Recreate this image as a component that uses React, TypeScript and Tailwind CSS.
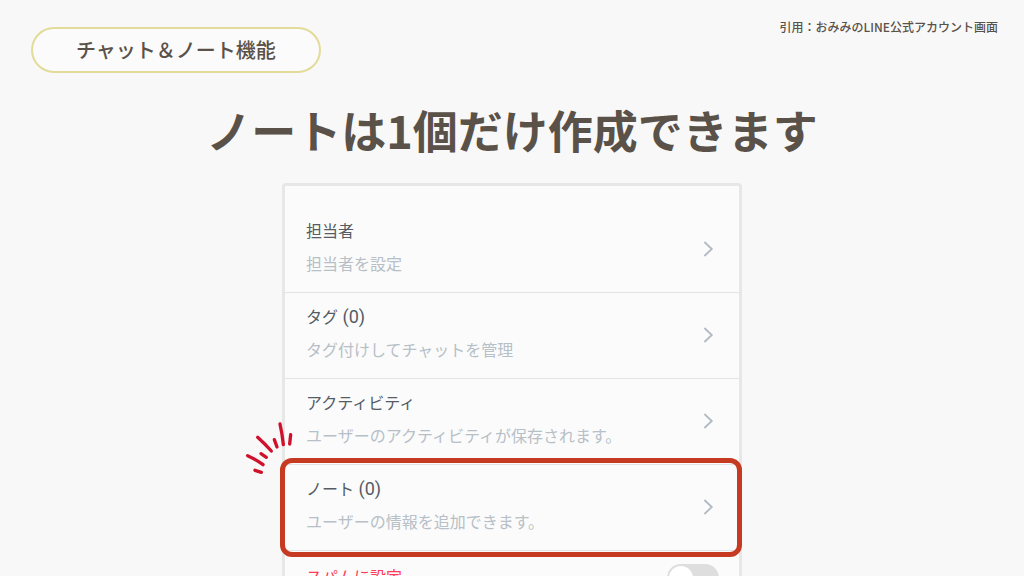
import React, { useState } from 'react';
import { clsx } from 'clsx';

const rows = [
  { title: '担当者', text: '担当者を設定' },
  { title: 'タグ', count: 0, text: 'タグ付けしてチャットを管理' },
  { title: 'アクティビティ', text: 'ユーザーのアクティビティが保存されます。' },
  { title: 'ノート', count: 0, text: 'ユーザーの情報を追加できます。', highlight: true },
];

const Chevron = () => (
  <svg width="12" height="18" viewBox="0 0 12 18" fill="none" stroke="#b1bac3" strokeWidth="1.8" aria-hidden="true">
    <path d="M2.4 2 L9.8 9 L2.4 16" />
  </svg>
);

// hand drawn strokes at the corner of the highlighted row
const Sparks = () => (
  <svg
    className="absolute -top-[54px] -left-[50px] pointer-events-none"
    width="60"
    height="70"
    viewBox="0 0 180 210"
    fill="none"
    stroke="#d0112b"
    strokeWidth="10"
    strokeLinecap="round"
    aria-hidden="true"
  >
    <path d="M38 134 Q64 146 84 161" />
    <path d="M68 79 Q90 99 109 120" />
    <path d="M135 39 Q142 70 145 101" />
    <path d="M167 71 L164 99" />
    <path d="M118 86 L126 108" />
    <path d="M78 128 L94 139" />
    <path d="M60 178 L79 184" />
  </svg>
);

const SettingRow = ({ title, count, text, highlight }: { title: string; count?: number; text: string; highlight?: boolean }) => (
  <li className="relative border-b border-[#e3e4e5]">
    <button type="button" className="flex w-full items-center justify-between pt-[13px] pb-[15px] pl-[21px] pr-[25px] text-left">
      <span className="block">
        <span className="block text-base leading-6 text-[#555c65]">
          {title}
          {count !== undefined && <span className="text-lg leading-none"> ({count})</span>}
        </span>
        <span className="mt-[9px] block text-base leading-6 text-[#b7bfc7]">{text}</span>
      </span>
      <Chevron />
    </button>
    {highlight && (
      <>
        <span className="absolute -inset-y-[7px] -left-[5px] -right-[3px] rounded-xl border-[5px] border-[#c63a21] pointer-events-none" />
        <Sparks />
      </>
    )}
  </li>
);

const App = () => {
  const [spam, setSpam] = useState(false);

  return (
    <main className="h-screen overflow-hidden bg-[#f8f8f8] font-['Noto_Sans_CJK_JP',sans-serif] text-[#5a5149]">
      <header className="flex items-start justify-between pt-[18px] pr-[26px] pl-[31px]">
        <p className="mt-[9px] rounded-full border-2 border-[#e3db98] bg-[#fbfbfb] px-[43px] py-[7px] text-xl leading-7 font-medium">
          チャット＆ノート機能
        </p>
        <p className="text-xs leading-[18px] font-medium">引用：おみみのLINE公式アカウント画面</p>
      </header>

      <h1 className="mt-[25px] text-center text-[45px] leading-[64px] font-bold">ノートは1個だけ作成できます</h1>

      <section className="mx-auto mt-[21px] w-full max-w-[460px] rounded-sm border-[3px] border-[#e7e7e6] bg-[#fbfbfb] pt-[21px] font-[Roboto,'Noto_Sans_CJK_JP',sans-serif]">
        <ul>
          {rows.map(row => (
            <SettingRow key={row.title} {...row} />
          ))}
        </ul>
        <label className="flex items-center justify-between pt-[13px] pb-4 pl-[21px] pr-5 text-base leading-6 text-[#ff3b57]">
          スパムに設定
          <input
            type="checkbox"
            checked={spam}
            onChange={e => setSpam(e.target.checked)}
            className={clsx(
              'h-7 w-[52px] appearance-none rounded-full p-[2px] before:block before:size-6 before:rounded-full before:bg-white',
              spam ? 'bg-[#06c755] before:ml-6' : 'bg-[#dedede]'
            )}
          />
        </label>
      </section>
    </main>
  );
};

export default App;
